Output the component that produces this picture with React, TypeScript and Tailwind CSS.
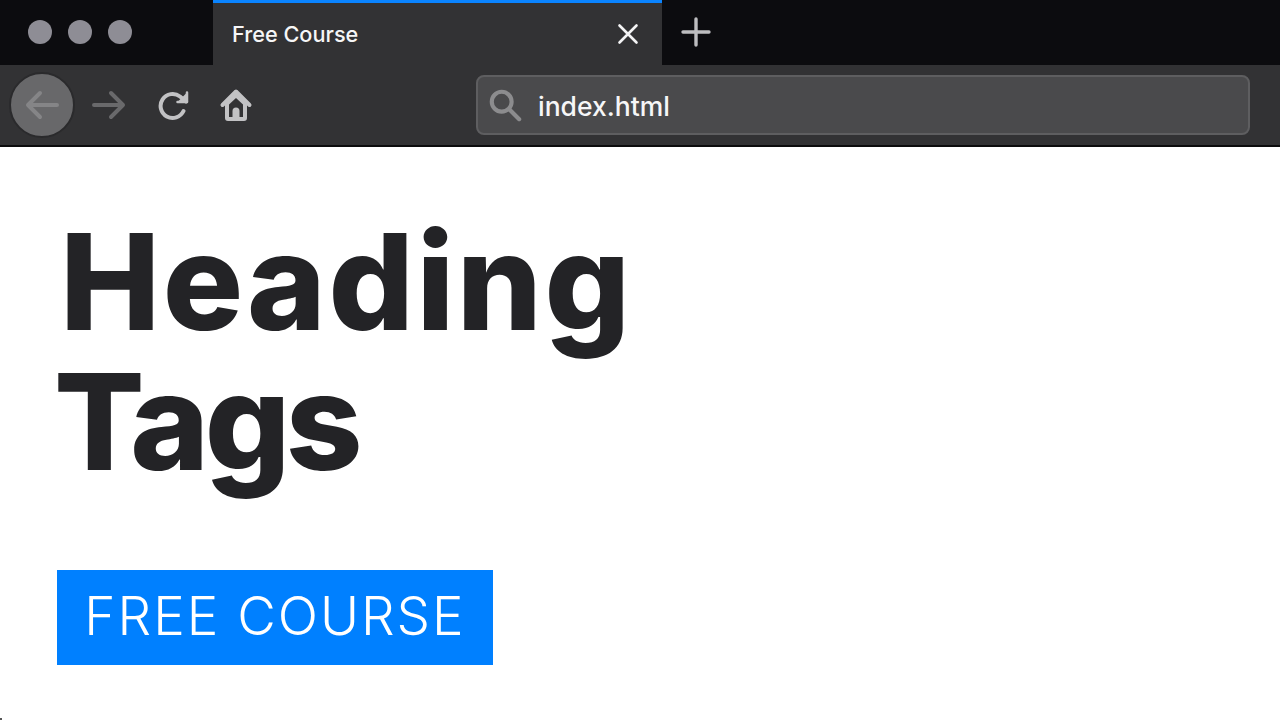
export default function App() {
  return (
    <div className="relative w-[1280px] h-[720px] overflow-hidden bg-white font-['Inter',sans-serif]">
      {/* Tab strip */}
      <div className="flex h-[65px] bg-[#0c0c0f]">
        <div className="flex w-[213px] shrink-0 items-center gap-[16px] pb-[2px] pl-[28px]">
          <span className="h-[24px] w-[24px] rounded-full bg-[#8e8d95]" />
          <span className="h-[24px] w-[24px] rounded-full bg-[#8e8d95]" />
          <span className="h-[24px] w-[24px] rounded-full bg-[#8e8d95]" />
        </div>
        <div className="flex w-[449px] shrink-0 items-center justify-between border-t-[3px] border-[#0a84ff] bg-[#323234] pl-[19px] pr-[22px]">
          <span className="mt-[1px] text-[21.7px] font-medium leading-none text-[#f6f6f7]">Free Course</span>
          <svg className="mb-[1px]" width="24" height="24" viewBox="0 0 24 24" fill="none" stroke="#f4f4f5" strokeWidth="2.6" strokeLinecap="round">
            <path d="M3.5 3.5 20.5 20.5M20.5 3.5 3.5 20.5" />
          </svg>
        </div>
        <div className="flex items-center pb-[1px] pl-[19px]">
          <svg width="30" height="30" viewBox="0 0 30 30" fill="none" stroke="#bdbdc0" strokeWidth="3.4" strokeLinecap="round">
            <path d="M15 2V28M2 15H28" />
          </svg>
        </div>
      </div>
      {/* Toolbar */}
      <div className="flex h-[82px] items-center border-b-2 border-[#0c0c0d] bg-[#323234]">
        <div className="ml-[9px] flex h-[66px] w-[66px] shrink-0 items-center justify-center rounded-full border-2 border-[#2a2a2c] bg-[#68686a]">
          <svg width="34" height="30" viewBox="0 0 34 30" fill="none" stroke="#858587" strokeWidth="4" strokeLinecap="round" strokeLinejoin="round">
            <path d="M32 15H3M15 3 3 15 15 27" />
          </svg>
        </div>
        <svg className="ml-[17px] shrink-0" width="34" height="30" viewBox="0 0 34 30" fill="none" stroke="#69696b" strokeWidth="4" strokeLinecap="round" strokeLinejoin="round">
          <path d="M2 15H31M19 3 31 15 19 27" />
        </svg>
        <svg className="ml-[32px] shrink-0" width="32" height="32" viewBox="0 0 32 32" fill="none" stroke="#c2c2c4" strokeWidth="4" strokeLinecap="round" strokeLinejoin="round">
          <path d="M25.5 22A12 12 0 1 1 22 7.5L28 12.5" />
          <path d="M29 3.5V13H19.5" fill="#c2c2c4" strokeWidth="2.5" />
        </svg>
        <svg className="ml-[29px] shrink-0" width="34" height="34" viewBox="0 0 34 34" fill="none">
          <path d="M17 3.5 3.5 17M17 3.5 30.5 17" stroke="#c2c2c4" strokeWidth="4" strokeLinecap="round" />
          <path fillRule="evenodd" d="M6 15.5 17 5l11 10.5V30a3 3 0 0 1-3 3H9a3 3 0 0 1-3-3V15.5ZM10 16.5V29h3.5v-6a3.5 3.5 0 0 1 7 0V29H24V16.5L17 10l-7 6.5Z" fill="#c2c2c4" />
          <circle cx="17" cy="27.5" r="1.2" fill="#c2c2c4" />
        </svg>
        <div className="ml-[223px] flex h-[60px] w-[774px] shrink-0 items-center rounded-[8px] border-2 border-[#5e5e60] bg-[#4a4a4c] pl-[10px]">
          <svg width="34" height="34" viewBox="0 0 36 36" fill="none" stroke="#8c8c8e" strokeWidth="4.4" strokeLinecap="round">
            <circle cx="14.5" cy="14.5" r="10.5" />
            <path d="M22.5 22.5 33 33" />
          </svg>
          <span className="ml-[16px] mt-[2px] text-[26.5px] font-medium leading-none text-[#f6f6f7]">index.html</span>
        </div>
      </div>
      {/* Page */}
      <div className="pl-[57px] pt-[64px]">
        <h1 className="w-[640px] text-[134px] font-extrabold leading-[140px] text-[#232326]">
          <span className="block pl-[3px] tracking-[2.5px]">Heading</span>
          <span className="-ml-[3px] block tracking-[-4.5px]">Tags</span>
        </h1>
        <div className="mt-[79px] flex h-[95px] w-[436px] items-center justify-center bg-[#0080ff] pb-[2px] text-[53px] font-light leading-none tracking-[2px] text-white">
          FREE COURSE
        </div>
      </div>
      <span className="absolute bottom-0 left-0 h-[2px] w-[2px] bg-[#555]" />
    </div>
  );
}
